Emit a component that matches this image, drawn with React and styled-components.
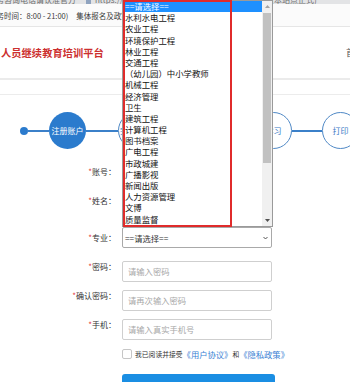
import React from 'react';
import styled, { createGlobalStyle } from 'styled-components';

const Global = createGlobalStyle`
  html, body { margin: 0; padding: 0; overflow: hidden; background: #fff; }
  body { font-family: "Noto Sans CJK SC", "Noto Sans", sans-serif; color: #333; }
  * { box-sizing: border-box; }
`;

const Page = styled.div`
  position: relative;
  width: 350px;
  height: 382px;
  overflow: hidden;
  background: #fff;
`;

const BrowserStrip = styled.div`
  height: 4px;
  background: #e3e4e6;
  overflow: hidden;
  display: flex;
  align-items: flex-end;
  white-space: nowrap;
  font-size: 8px;
  line-height: 8px;
  color: #6f6f6f;
`;

const StripText = styled.span`
  margin-left: ${p => p.$ml || 0}px;
`;

const Favicon = styled.span`
  width: 5px;
  height: 8px;
  margin-left: ${p => p.$ml || 0}px;
  background: #8fa3bf;
  flex-shrink: 0;
`;

const ServiceBar = styled.div`
  height: 23px;
  border-bottom: 1px solid #e6e6e6;
  background: #fbfbfb;
  display: flex;
  align-items: center;
  white-space: nowrap;
  overflow: hidden;
  font-size: 7.5px;
  color: #3a3a3a;
`;

const ServiceItem = styled.span`
  margin-left: ${p => p.$ml}px;
  flex-shrink: 0;
`;

const Header = styled.div`
  height: 53px;
  border-bottom: 2px solid #ebebeb;
  display: flex;
  align-items: center;
  white-space: nowrap;
  overflow: hidden;
`;

const Title = styled.div`
  margin-left: 1px;
  font-size: 10.2px;
  font-weight: 700;
  letter-spacing: 0.1px;
  color: #cc2f2f;
  flex-shrink: 0;
`;

const Nav = styled.div`
  margin-left: 242px;
  font-size: 9px;
  color: #555;
  flex-shrink: 0;
`;

const Main = styled.div`
  margin-top: 14px;
  border-top: 1px solid #ececec;
  padding-top: 17px;
`;

const Steps = styled.div`
  display: flex;
  align-items: center;
  height: 37px;
  padding-left: 20px;
  white-space: nowrap;
`;

const StartDot = styled.div`
  width: 8px;
  height: 8px;
  border-radius: 50%;
  background: #2b7bcd;
  flex-shrink: 0;
`;

const Connector = styled.div`
  width: ${p => p.$w}px;
  height: 2px;
  background: #3b80c9;
  flex-shrink: 0;
`;

const StepCircle = styled.div`
  width: 37px;
  height: 37px;
  border-radius: 50%;
  flex-shrink: 0;
  display: flex;
  align-items: center;
  justify-content: center;
  font-size: 8px;
  background: ${p => (p.$active ? '#2b7bcd' : '#fff')};
  color: ${p => (p.$active ? '#fff' : '#3b7bc6')};
  border: ${p => (p.$active ? 'none' : '1.5px solid #5089c6')};
`;

const Form = styled.div`
  margin-top: 12px;
  display: flex;
  flex-direction: column;
`;

const Row = styled.div`
  display: flex;
  align-items: center;
  height: 21px;
  margin-bottom: ${p => p.$mb}px;
`;

const Label = styled.label`
  width: 116px;
  text-align: right;
  font-size: 8px;
  color: #333;
  flex-shrink: 0;
  white-space: nowrap;
`;

const Star = styled.span`
  color: #e4393c;
`;

const Field = styled.div`
  margin-left: 6px;
  width: 150px;
  height: 21px;
  flex-shrink: 0;
`;

const Input = styled.input`
  width: 150px;
  height: 21px;
  border: 1px solid #cfcfcf;
  border-radius: 2px;
  padding: 0 5px;
  font-family: inherit;
  font-size: 8.3px;
  color: #333;
  outline: none;
  &::placeholder { color: #a8a8a8; }
`;

const SelectBox = styled.div`
  width: 150px;
  height: 21px;
  border: 1px solid #a9a9a9;
  border-radius: 2px;
  padding: 0 3px 0 2px;
  display: flex;
  align-items: center;
  justify-content: space-between;
  font-size: 8.3px;
  color: #333;
`;

const Agreement = styled.div`
  margin-top: 14px;
  padding-left: 122px;
  display: flex;
  align-items: center;
  height: 10px;
  white-space: nowrap;
`;

const CheckBox = styled.span`
  width: 10px;
  height: 10px;
  border: 1px solid #c6c6c6;
  border-radius: 2px;
  background: #fff;
  flex-shrink: 0;
  margin-right: 3px;
`;

const AgreeText = styled.span`
  font-size: 6.8px;
  color: #333;
`;

const AgreeLink = styled.span`
  font-size: 8.3px;
  color: #3b7fd4;
`;

const Submit = styled.button`
  margin-top: 15px;
  margin-left: 122px;
  width: 153px;
  height: 24px;
  border: none;
  border-radius: 3px;
  background: #1a8ee3;
  color: #fff;
  font-family: inherit;
  font-size: 9px;
  flex-shrink: 0;
`;

/* open select dropdown overlay */
const Dropdown = styled.div`
  position: absolute;
  left: 122px;
  top: 0;
  width: 151px;
  height: 227px;
  background: #fff;
  border: 1px solid #9a9a9a;
  display: flex;
  z-index: 5;
`;

const OptionList = styled.div`
  flex: 1;
  overflow: hidden;
`;

const Option = styled.div`
  height: 11.2px;
  line-height: 11.2px;
  padding-left: 2px;
  font-size: 8.4px;
  white-space: nowrap;
  color: ${p => (p.$selected ? '#fff' : '#111')};
  background: ${p => (p.$selected ? '#1e90ff' : 'transparent')};
`;

const ScrollBar = styled.div`
  width: 10px;
  background: #f0f0f0;
  display: flex;
  flex-direction: column;
  flex-shrink: 0;
`;

const ScrollBtn = styled.div`
  height: 11px;
  display: flex;
  align-items: center;
  justify-content: center;
  flex-shrink: 0;
`;

const Thumb = styled.div`
  margin: 1px 1px 0;
  height: 150px;
  background: #c1c1c1;
  flex-shrink: 0;
`;

const Track = styled.div`
  flex: 1;
`;

const RedMark = styled.div`
  position: absolute;
  left: 123px;
  top: 0;
  width: 109px;
  height: 227px;
  border: 2px solid #e02b2b;
  z-index: 6;
  pointer-events: none;
`;

const options = [
  '==请选择==', '水利水电工程', '农业工程', '环境保护工程', '林业工程', '交通工程',
  '（幼儿园）中小学教师', '机械工程', '经济管理', '卫生', '建筑工程', '计算机工程',
  '图书档案', '广电工程', '市政城建', '广播影视', '新闻出版', '人力资源管理', '文博', '质量监督',
];

const Arrow = ({ up, color }) => (
  <svg width="5" height="3" viewBox="0 0 5 3">
    <path d={up ? 'M0 3 L2.5 0 L5 3 Z' : 'M0 0 L5 0 L2.5 3 Z'} fill={color} />
  </svg>
);

const Chevron = () => (
  <svg width="5" height="4" viewBox="0 0 5 4">
    <path d="M0.5 1 L2.5 3 L4.5 1" fill="none" stroke="#444" strokeWidth="0.9" />
  </svg>
);

const fields = [
  { label: '账号', ph: '请输入账号', mb: 8 },
  { label: '姓名', ph: '请输入真实姓名', mb: 16 },
  { label: '专业', select: true, mb: 8 },
  { label: '密码', ph: '请输入密码', type: 'password', mb: 8 },
  { label: '确认密码', ph: '请再次输入密码', type: 'password', mb: 8 },
  { label: '手机', ph: '请输入真实手机号', mb: 0 },
];

export default function App() {
  return (
    <Page>
      <Global />
      <BrowserStrip>
        <StripText $ml={-4}>务咨询电话请认准官方</StripText>
        <Favicon $ml={10} />
        <StripText $ml={4}>https://zyjs.edu.cn/register</StripText>
        <StripText $ml={60}>学院(本站点正式)</StripText>
      </BrowserStrip>
      <ServiceBar>
        <ServiceItem $ml={-18.5}>（服务时间：8:00 - 21:00)</ServiceItem>
        <ServiceItem $ml={8}>集体报名及政策咨询</ServiceItem>
      </ServiceBar>
      <Header>
        <Title>人员继续教育培训平台</Title>
        <Nav>首页</Nav>
      </Header>
      <Main>
        <Steps>
          <StartDot />
          <Connector $w={21} />
          <StepCircle $active>注册账户</StepCircle>
          <Connector $w={31.5} />
          <StepCircle>完善信息</StepCircle>
          <Connector $w={31.5} />
          <StepCircle>选课</StepCircle>
          <Connector $w={32} />
          <StepCircle>学习</StepCircle>
          <Connector $w={30} />
          <StepCircle>打印</StepCircle>
        </Steps>
        <Form>
          {fields.map(f => (
            <Row key={f.label} $mb={f.mb}>
              <Label><Star>*</Star>{f.label}：</Label>
              <Field>
                {f.select ? (
                  <SelectBox>
                    <span>==请选择==</span>
                    <Chevron />
                  </SelectBox>
                ) : (
                  <Input type={f.type || 'text'} placeholder={f.ph} />
                )}
              </Field>
            </Row>
          ))}
          <Agreement>
            <CheckBox />
            <AgreeText>我已阅读并接受</AgreeText>
            <AgreeLink>《用户协议》</AgreeLink>
            <AgreeText>和</AgreeText>
            <AgreeLink>《隐私政策》</AgreeLink>
          </Agreement>
          <Submit>立即注册</Submit>
        </Form>
      </Main>
      <Dropdown>
        <OptionList>
          {options.map((o, i) => (
            <Option key={o} $selected={i === 0}>{o}</Option>
          ))}
        </OptionList>
        <ScrollBar>
          <ScrollBtn><Arrow up color="#a3a3a3" /></ScrollBtn>
          <Thumb />
          <Track />
          <ScrollBtn><Arrow color="#505050" /></ScrollBtn>
        </ScrollBar>
      </Dropdown>
      <RedMark />
    </Page>
  );
}
